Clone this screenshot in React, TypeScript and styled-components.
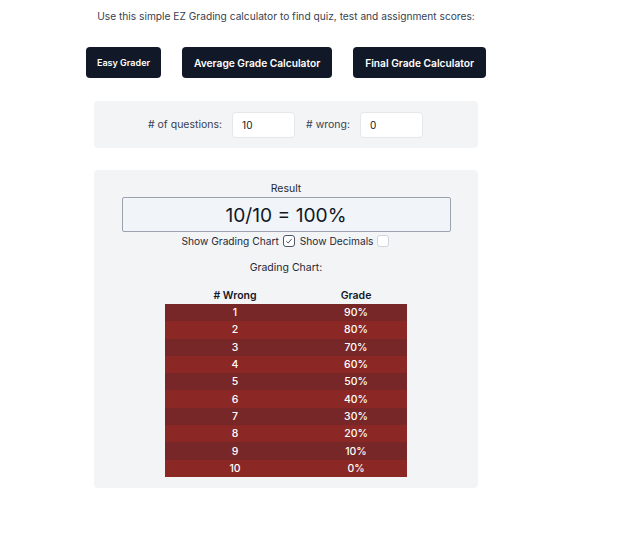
import React from "react";
import styled, { createGlobalStyle } from "styled-components";

const GlobalStyle = createGlobalStyle`
  body {
    margin: 0;
    background: #ffffff;
    font-family: Inter, "Noto Sans", "Liberation Sans", sans-serif;
  }
`;

const Page = styled.div`
  width: 572px;
  display: flex;
  flex-direction: column;
  align-items: center;
  padding-top: 9px;
`;

const Intro = styled.p`
  margin: 0;
  font-size: 10.2px;
  line-height: 15px;
  color: #374151;
`;

const ButtonRow = styled.div`
  display: flex;
  gap: 21px;
  margin-top: 23px;
`;

const NavButton = styled.button<{ $small?: boolean }>`
  height: 31px;
  padding: 0 ${(p) => (p.$small ? "11px" : "12px")};
  border: none;
  border-radius: 4px;
  background: #111827;
  color: #ffffff;
  font-family: inherit;
  font-weight: 600;
  font-size: ${(p) => (p.$small ? "9px" : "10.2px")};
`;

const Panel = styled.div`
  width: 384px;
  box-sizing: border-box;
  background: #f3f4f6;
  border-radius: 4px;
`;

const InputPanel = styled(Panel)`
  margin-top: 23px;
  height: 47px;
  display: flex;
  align-items: center;
  justify-content: center;
  gap: 10px;
`;

const Label = styled.label`
  font-size: 10.5px;
  color: #374151;
`;

const NumberInput = styled.input`
  width: 63px;
  height: 26px;
  box-sizing: border-box;
  border: 1px solid #e5e7eb;
  border-radius: 4px;
  background: #ffffff;
  padding: 0 9px;
  font-family: inherit;
  font-size: 10px;
  color: #111827;
  margin-right: 1px;
`;

const ResultPanel = styled(Panel)`
  margin-top: 22px;
  padding: 12px 0 11px;
  display: flex;
  flex-direction: column;
  align-items: center;
`;

const Caption = styled.div`
  font-size: 10.5px;
  line-height: 14px;
  color: #1f2937;
`;

const ResultBox = styled.div`
  margin-top: 1px;
  width: 329px;
  height: 35px;
  box-sizing: border-box;
  border: 1px solid #9ca3af;
  border-radius: 2px;
  background: #f1f5f9;
  display: flex;
  align-items: center;
  justify-content: center;
  font-size: 19.2px;
  color: #111827;
`;

const OptionRow = styled.div`
  margin-top: 2px;
  display: flex;
  align-items: center;
  gap: 4px;
  font-size: 10.2px;
  line-height: 14px;
  color: #1f2937;
`;

const Box = styled.span<{ $checked?: boolean }>`
  width: 10px;
  height: 10px;
  border: 1px solid ${(p) => (p.$checked ? "#4b5563" : "#d1d5db")};
  border-radius: 3px;
  background: #ffffff;
  display: inline-flex;
  align-items: center;
  justify-content: center;
  margin-right: 1px;
`;

const ChartTitle = styled(Caption)`
  margin-top: 13px;
`;

const Table = styled.table`
  margin-top: 12px;
  border-collapse: collapse;
  font-size: 10.5px;
`;

const Head = styled.th<{ $w: number }>`
  width: ${(p) => p.$w}px;
  height: 17px;
  padding: 0;
  font-weight: 600;
  color: #111827;
  text-align: center;
`;

const Row = styled.tr<{ $odd: boolean }>`
  background: ${(p) => (p.$odd ? "#772727" : "#8b2825")};
`;

const Cell = styled.td`
  height: 17.3px;
  padding: 0;
  text-align: center;
  color: #ffffff;
  font-weight: 500;
`;

function CheckMark() {
  return (
    <svg width="8" height="8" viewBox="0 0 8 8">
      <path d="M1.3 4.2 L3.2 6 L6.8 1.8" fill="none" stroke="#374151" strokeWidth="0.9" />
    </svg>
  );
}

export default function App() {
  const rows = Array.from({ length: 10 }, (_, i) => ({
    wrong: i + 1,
    grade: 90 - i * 10,
  }));
  return (
    <Page>
      <GlobalStyle />
      <Intro>Use this simple EZ Grading calculator to find quiz, test and assignment scores:</Intro>
      <ButtonRow>
        <NavButton $small>Easy Grader</NavButton>
        <NavButton>Average Grade Calculator</NavButton>
        <NavButton>Final Grade Calculator</NavButton>
      </ButtonRow>
      <InputPanel>
        <Label># of questions:</Label>
        <NumberInput defaultValue="10" />
        <Label># wrong:</Label>
        <NumberInput defaultValue="0" />
      </InputPanel>
      <ResultPanel>
        <Caption>Result</Caption>
        <ResultBox>10/10 = 100%</ResultBox>
        <OptionRow>
          Show Grading Chart
          <Box $checked>
            <CheckMark />
          </Box>
          Show Decimals
          <Box />
        </OptionRow>
        <ChartTitle>Grading Chart:</ChartTitle>
        <Table>
          <thead>
            <tr>
              <Head $w={140}># Wrong</Head>
              <Head $w={102}>Grade</Head>
            </tr>
          </thead>
          <tbody>
            {rows.map((r, i) => (
              <Row key={r.wrong} $odd={i % 2 === 0}>
                <Cell>{r.wrong}</Cell>
                <Cell>{r.grade}%</Cell>
              </Row>
            ))}
          </tbody>
        </Table>
      </ResultPanel>
    </Page>
  );
}
